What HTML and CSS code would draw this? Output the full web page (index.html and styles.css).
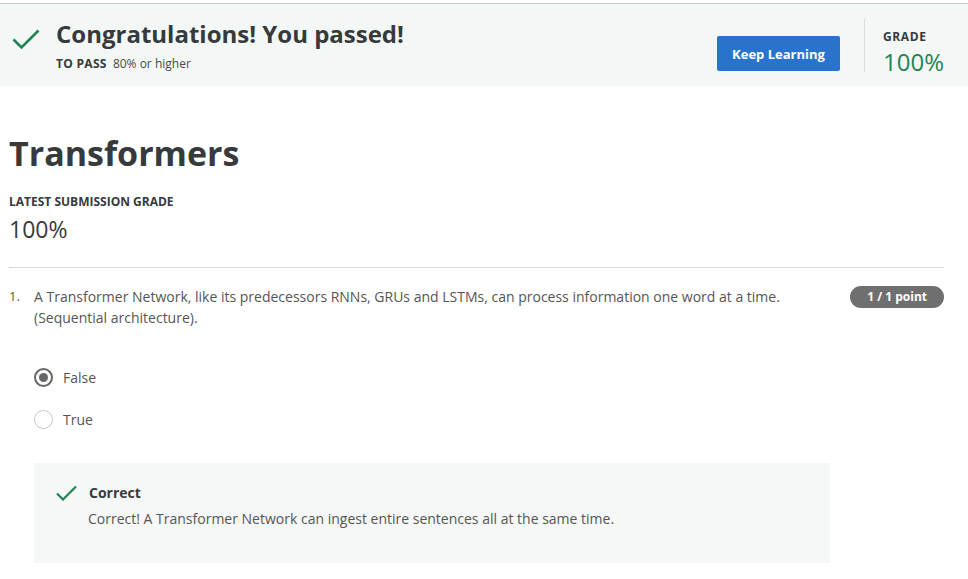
FILE: index.html
```html
<!DOCTYPE html>
<html lang="en">
<head>
<meta charset="utf-8">
<title>Transformers</title>
<link rel="stylesheet" href="styles.css">
</head>
<body>
<header class="banner">
  <div class="banner-left">
    <svg class="banner-check" width="28" height="22" viewBox="0 0 28 22"><path d="M1.5 11.5 L9.5 19.5 L26.5 2.5" fill="none" stroke="#1f8354" stroke-width="2.6"/></svg>
    <div class="banner-text">
      <h2 class="banner-title">Congratulations! You passed!</h2>
      <div class="banner-sub"><span class="label">TO PASS</span> 80% or higher</div>
    </div>
  </div>
  <div class="banner-right">
    <button class="btn-primary">Keep Learning</button>
    <div class="grade-box">
      <div class="label grade-label">GRADE</div>
      <div class="grade-value">100%</div>
    </div>
  </div>
</header>

<main class="content">
  <h1 class="page-title">Transformers</h1>
  <div class="label sub-label">LATEST SUBMISSION GRADE</div>
  <div class="sub-grade">100%</div>
  <hr class="divider">

  <section class="question">
    <div class="q-head">
      <span class="q-num">1.</span>
      <p class="q-text">A Transformer Network, like its predecessors RNNs, GRUs and LSTMs, can process information one word at a time. (Sequential architecture).</p>
      <span class="badge">1 / 1 point</span>
    </div>
    <div class="options">
      <div class="option"><span class="radio checked"></span><span>False</span></div>
      <div class="option"><span class="radio"></span><span>True</span></div>
    </div>
    <div class="feedback">
      <div class="fb-head">
        <svg class="fb-check" width="21" height="16" viewBox="0 0 21 16"><path d="M1 8.5 L7 14.5 L20 1.5" fill="none" stroke="#1f8354" stroke-width="2.2"/></svg>
        <span class="fb-title">Correct</span>
      </div>
      <p class="fb-text">Correct! A Transformer Network can ingest entire sentences all at the same time.</p>
    </div>
  </section>
</main>
</body>
</html>
```

FILE: styles.css
```css
* { box-sizing: border-box; }
html, body { margin: 0; padding: 0; background: #fff; }
body {
  font-family: "Open Sans", "Noto Sans", sans-serif;
  color: #373a3c;
  padding-top: 3px;
}
.label {
  font-weight: 700;
  text-transform: uppercase;
  color: #373a3c;
}
.banner {
  border-top: 1px solid #c8c8c8;
  background: #f3f8f6;
  height: 83px;
  display: flex;
  justify-content: space-between;
  align-items: stretch;
}
.banner-left {
  display: flex;
  align-items: flex-start;
  padding-left: 12px;
  padding-top: 23px;
}
.banner-check { margin-top: 1px; margin-right: 16px; }
.banner-title {
  margin: 0;
  font-size: 24px;
  line-height: 30px;
  font-weight: 700;
  color: #373a3c;
  margin-top: -8px;
}
.banner-sub {
  font-size: 12px;
  color: #4a4a4a;
  margin-top: 6px;
}
.banner-sub .label { font-size: 12px; letter-spacing: 0.3px; margin-right: 3px; }
.banner-right {
  display: flex;
  align-items: flex-start;
  padding-right: 24px;
  padding-top: 14px;
}
.btn-primary {
  background: #2a73cc;
  color: #fff;
  border: 0;
  border-radius: 2px;
  font-family: inherit;
  font-weight: 700;
  font-size: 13px;
  width: 123px;
  height: 35px;
  margin-right: 24px;
  margin-top: 18px;
}
.grade-box {
  border-left: 1px solid #dcdcdc;
  height: 54px;
  padding-left: 18px;
  padding-top: 10px;
}
.grade-label { font-size: 12px; letter-spacing: 0.6px; line-height: 17px; }
.grade-value {
  color: #1f8354;
  font-size: 24px;
  line-height: 33px;
  margin-top: 0;
}
.content { padding: 0 24px 0 9px; }
.page-title {
  margin: 44px 0 0;
  font-size: 34px;
  line-height: 46px;
  font-weight: 700;
  color: #373a3c;
}
.sub-label { font-size: 12px; margin-top: 18px; line-height: 16px; }
.sub-grade { font-size: 23px; line-height: 30px; margin-top: 4px; color: #373a3c; }
.divider {
  border: 0;
  border-top: 1px solid #dadada;
  margin: 23px 0 0;
}
.question { padding-top: 18px; }
.q-head { display: flex; align-items: flex-start; }
.q-num { width: 25px; font-size: 13px; line-height: 21px; color: #555; }
.q-text {
  margin: 0;
  flex: 1;
  font-size: 14px;
  line-height: 21px;
  color: #555;
  padding-right: 60px;
}
.badge {
  background: #6f6f6f;
  color: #fff;
  border-radius: 12px;
  font-weight: 700;
  font-size: 12px;
  height: 22px;
  line-height: 22px;
  padding: 0 17px;
  white-space: nowrap;
  margin-top: 0;
}
.options { padding: 39px 0 0 25px; display: flex; flex-direction: column; gap: 22px; }
.option { display: flex; align-items: center; font-size: 14px; color: #555; height: 20px; }
.radio {
  width: 19px; height: 19px;
  border-radius: 50%;
  border: 1.5px solid #c7c7c7;
  margin-right: 10px;
  display: inline-flex;
  align-items: center;
  justify-content: center;
}
.radio.checked { border: 2px solid #666; }
.radio.checked::after {
  content: "";
  width: 9px; height: 9px;
  border-radius: 50%;
  background: #666;
}
.feedback {
  margin: 34px 0 0 25px;
  width: 796px;
  height: 100px;
  background: #f5f8f7;
  padding: 20px 22px;
}
.fb-head { display: flex; align-items: center; }
.fb-check { margin-right: 12px; }
.fb-title { font-weight: 700; font-size: 14px; color: #373a3c; }
.fb-text { margin: 7px 0 0 32px; font-size: 14px; color: #555; line-height: 20px; }
```
